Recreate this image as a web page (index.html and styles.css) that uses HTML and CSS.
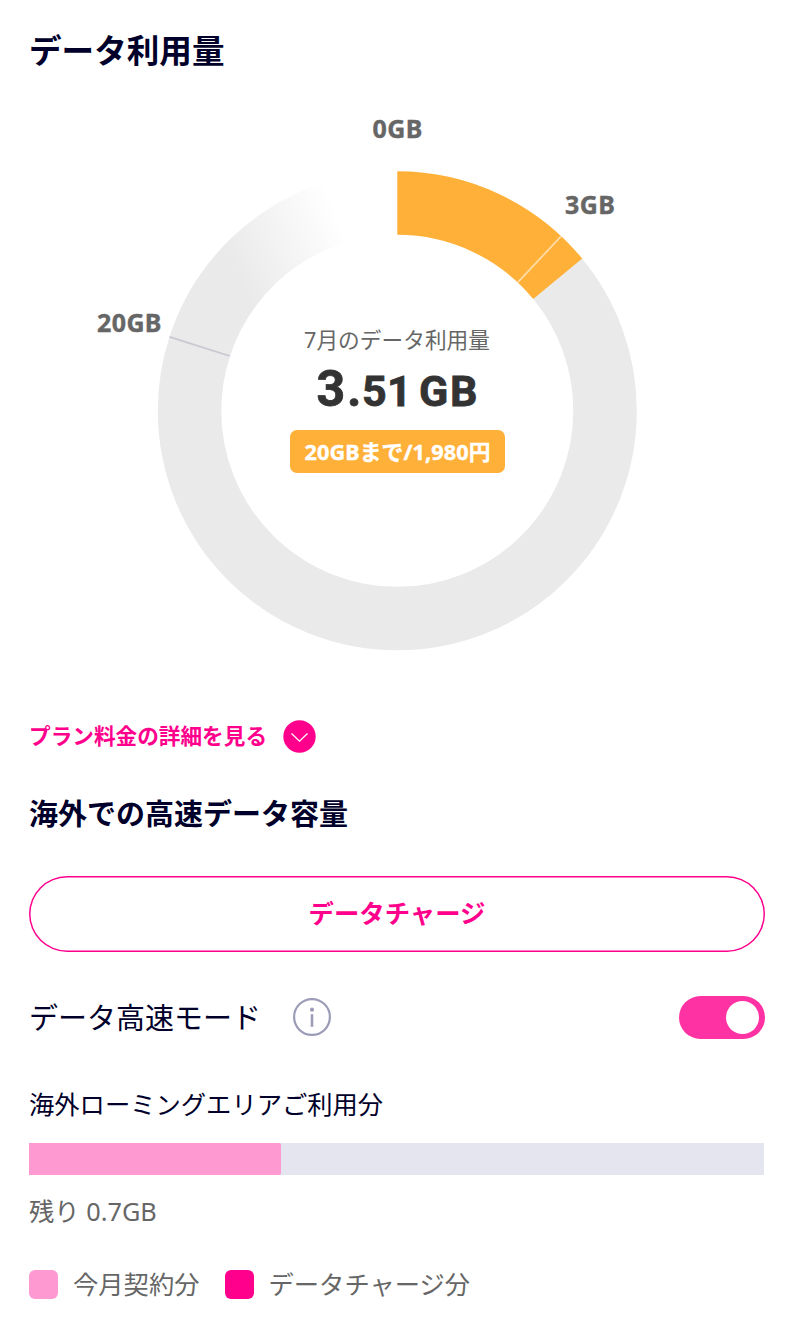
FILE: index.html
```
<!DOCTYPE html>
<html lang="ja">
<head>
  <meta charset="UTF-8" />
  <meta name="viewport" content="width=device-width, initial-scale=1.0"/>
  <title>データ利用量</title>
  <link rel="stylesheet" href="styles.css">
</head>
<body>
  <div class="container">
    <h1>データ利用量</h1>

    <!-- full circle = 25GB, clockwise from the top -->
    <svg class="chart" viewBox="29 100 736 560" width="736" height="560">
      <defs>
        <linearGradient id="fade" gradientUnits="userSpaceOnUse" x1="236" y1="268" x2="341" y2="222">
          <stop offset="0" stop-color="#eaeaea"/>
          <stop offset="1" stop-color="#eaeaea" stop-opacity="0"/>
        </linearGradient>
      </defs>
      <circle class="ring rest" cx="397.3" cy="410.8" r="207.75" pathLength="25" stroke-dasharray="16.5 8.5" stroke-dashoffset="-3.5" transform="rotate(-90 397.3 410.8)"/>
      <path class="ring" stroke="url(#fade)" d="M199.7 346.6A207.75 207.75 0 0 1 343.5 210.1"/>
      <circle class="ring used" cx="397.3" cy="410.8" r="207.75" pathLength="25" stroke-dasharray="3.51 21.49" transform="rotate(-90 397.3 410.8)"/>
      <path class="tick-used" d="M561 236.4L517.5 282.7"/>
      <path class="tick" d="M169.5 336.9L229.7 356"/>

      <text class="scale" x="372.5" y="138" textLength="50">0GB</text>
      <text class="scale" x="565" y="214" textLength="50">3GB</text>
      <text class="scale" x="97" y="332" textLength="64.5">20GB</text>

      <text class="month" x="304" y="348" textLength="186">7月のデータ利用量</text>
      <text class="amount big" x="316.5" y="406">3</text>
      <text class="amount big" x="347" y="406">.</text>
      <text class="amount" x="362 387" y="406">51</text>
      <text class="amount" x="419 450" y="406">GB</text>
      <rect class="badge" x="290" y="430" width="215" height="43" rx="7"/>
      <text class="badge-text" x="304.5" y="459.5" textLength="186">20GBまで/1,980円</text>
    </svg>

    <a class="detail">
      <span>プラン料金の詳細を見る</span>
      <svg width="33" height="33" viewBox="0 0 33 33">
        <circle cx="16.5" cy="16.5" r="16.2" fill="#ff008c"/>
        <path d="M8.5 13.5L16.5 21.2L24.5 13.5" fill="none" stroke="#fff" stroke-width="1.3"/>
      </svg>
    </a>

    <h2>海外での高速データ容量</h2>
    <button>データチャージ</button>

    <div class="mode">
      <span>データ高速モード</span>
      <svg width="38" height="38" viewBox="0 0 38 38">
        <circle cx="19" cy="19" r="17.9" fill="none" stroke="#9c9cb8" stroke-width="2.2"/>
        <circle cx="19" cy="11.7" r="2.1" fill="#9c9cb8"/>
        <path d="M19 16.2V28.8" stroke="#9c9cb8" stroke-width="2.6"/>
      </svg>
      <div class="toggle"><div class="knob"></div></div>
    </div>

    <div class="roaming">海外ローミングエリアご利用分</div>
    <div class="bar"><div class="fill" style="width: 252px"></div></div>
    <div class="left">残り 0.7GB</div>

    <div class="legend">
      <span class="swatch"></span>
      <span class="name">今月契約分</span>
      <span class="swatch charge"></span>
      <span class="name">データチャージ分</span>
    </div>
  </div>
</body>
</html>
```
FILE: styles.css
```
body {
  margin: 0;
  background-color: #fff;
  color: #00002a;
  font-family: "Noto Sans", "Noto Sans CJK JP", sans-serif;
}
.container {
  width: 736px;
  padding: 26px 0 0 29px;
}
h1 {
  margin: 0;
  font-size: 32.6px;
  line-height: 50px;
  font-weight: bold;
}
.chart {
  display: block;
  margin-top: 24px;
}
.ring {
  fill: none;
  stroke-width: 63.5;
}
.rest {
  stroke: #eaeaea;
}
.used {
  stroke: #ffb038;
}
.tick-used {
  stroke: #ffdca4;
  stroke-width: 1.8;
}
.tick {
  stroke: #c8c8d3;
  stroke-width: 1.8;
}
.scale {
  font-size: 25px;
  font-weight: bold;
  fill: #666;
  stroke: #666;
  stroke-width: 0.4;
}
.month {
  font-size: 21.7px;
  fill: #666;
}
.amount {
  font-family: Roboto, sans-serif;
  font-size: 43px;
  font-weight: bold;
  fill: #333;
  stroke: #333;
  stroke-width: 0.8;
}
.big {
  font-size: 50px;
}
.badge {
  fill: #ffb038;
}
.badge-text {
  font-size: 21.7px;
  font-weight: bold;
  fill: #fff;
  stroke: #fff;
  stroke-width: 0.4;
}
.detail {
  display: flex;
  align-items: center;
  gap: 16px;
  height: 33px;
  margin-top: 60px;
  font-size: 21.65px;
  font-weight: bold;
  color: #ff008c;
}
.detail span {
  padding-bottom: 4px;
}
h2 {
  margin: 39px 0 0;
  font-size: 29px;
  line-height: 44px;
  font-weight: bold;
}
button {
  display: block;
  width: 736px;
  height: 76px;
  margin-top: 40px;
  padding: 0 0 5px;
  border: none;
  border-radius: 38px;
  box-shadow: inset 0 0 0 1.5px #ff008c;
  background: #fff;
  color: #ff008c;
  font-family: inherit;
  font-size: 25.4px;
  font-weight: bold;
}
.mode {
  display: flex;
  align-items: center;
  height: 44px;
  margin-top: 43px;
  font-size: 29px;
}
.mode span {
  padding-bottom: 3px;
}
.mode svg {
  margin-left: 32px;
}
.toggle {
  box-sizing: border-box;
  width: 86px;
  height: 43px;
  margin: 1px 0 0 auto;
  padding: 5px 6px;
  border-radius: 22px;
  background-color: #ff32a3;
}
.knob {
  width: 33px;
  height: 33px;
  margin-left: auto;
  border-radius: 50%;
  background-color: #fff;
}
.roaming {
  margin-top: 46px;
  font-size: 25.3px;
  line-height: 38px;
}
.bar {
  width: 735px;
  height: 32px;
  margin-top: 20px;
  background-color: #e5e5ef;
}
.fill {
  height: 32px;
  border-radius: 0 2px 2px 0;
  background-color: #ff99d1;
}
.left {
  margin-top: 17px;
  font-size: 25.3px;
  line-height: 38px;
  color: #666;
}
.legend {
  display: flex;
  align-items: center;
  height: 38px;
  margin-top: 35px;
  font-size: 25.3px;
  color: #666;
}
.name {
  padding-bottom: 2px;
}
.swatch {
  width: 29px;
  height: 29px;
  margin-right: 15px;
  border-radius: 6px;
  background-color: #ff99d1;
}
.charge {
  margin-left: 25px;
  background-color: #ff008c;
}
```
